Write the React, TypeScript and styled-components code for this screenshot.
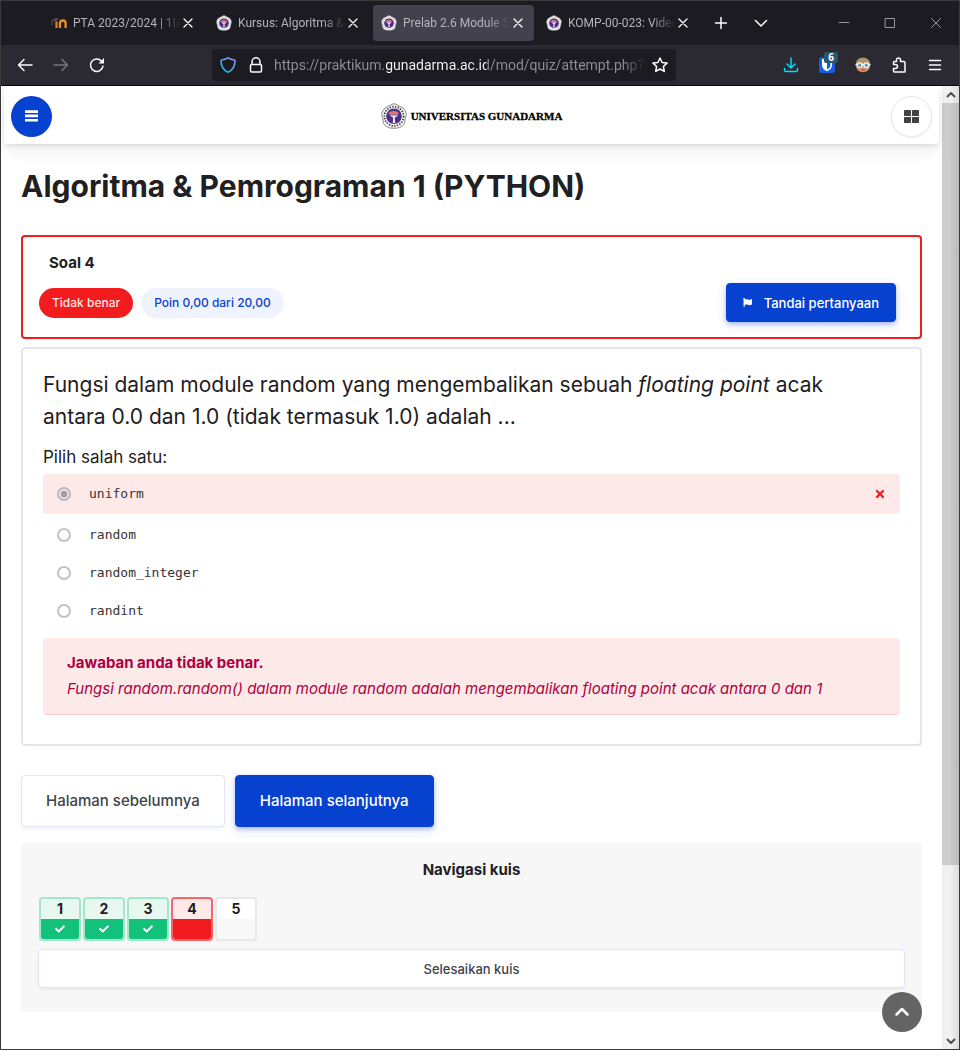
import React, { useState } from 'react';
import styled, { createGlobalStyle, css } from 'styled-components';
import { FaCheck, FaFlag, FaTimes } from 'react-icons/fa';

const GlobalStyle = createGlobalStyle`
  *, *::before, *::after { box-sizing: border-box; }
  body { margin: 0; background: #ffffff; }
  button, input { font: inherit; margin: 0; }
  button { border: 0; padding: 0; background: none; cursor: pointer; }
  h1, h2, p, fieldset, legend { margin: 0; padding: 0; border: 0; }
  svg { display: block; flex: none; }
`;

const color = {
  blue: '#0641d0',
  red: '#f21c1f',
  green: '#12c27a',
  ink: '#1f2021',
  text: '#404347',
};

const BrowserWindow = styled.div`
  display: flex;
  flex-direction: column;
  min-height: 100vh;
  border: 1px solid #3a3a3d;
  font-family: Inter, 'Open Sans', sans-serif;
  color: ${color.ink};
`;

const TabBar = styled.div`
  display: flex;
  align-items: center;
  height: 44px;
  padding-left: 42px;
  background: #1c1b22;
  color: #fbfbfe;
  font-family: Roboto, 'Open Sans', sans-serif;
  font-size: 12px;
`;

const TabList = styled.div`
  display: flex;
  gap: 4px;
  min-width: 0;
`;

const Tab = styled.div<{ $active?: boolean }>`
  display: flex;
  align-items: center;
  flex: 0 1 161px;
  width: 161px;
  min-width: 0;
  height: 36px;
  padding: 0 8px;
  border-radius: 4px;
  background: ${(p) => (p.$active ? '#42414d' : 'transparent')};
`;

const TabTitle = styled.button`
  flex: 1;
  min-width: 0;
  margin-left: 6px;
  overflow: hidden;
  white-space: nowrap;
  text-align: left;
  color: #b4b3ba;
  mask-image: linear-gradient(to right, #000 calc(100% - 22px), transparent);
`;

const ChromeButton = styled.button<{ $width: number }>`
  display: flex;
  flex: none;
  align-items: center;
  justify-content: center;
  width: ${(p) => p.$width}px;
  height: 32px;
  color: #fbfbfe;
`;

const TabActions = styled.div`
  display: flex;
  gap: 4px;
  margin-left: 4px;
`;

const WindowControls = styled.div`
  display: flex;
  margin-left: auto;
`;

const Toolbar = styled.div`
  display: flex;
  align-items: center;
  height: 41px;
  padding: 0 6px;
  background: #2b2a33;
  border-bottom: 1px solid #0c0c0d;
`;

const AddressBar = styled.div`
  display: flex;
  flex: 1;
  align-items: center;
  min-width: 0;
  height: 32px;
  margin: 0 97px;
  padding: 0 2px;
  border-radius: 4px;
  background: #1c1b22;
`;

const AddressInput = styled.input`
  flex: 1;
  min-width: 0;
  margin-left: 4px;
  padding: 0;
  border: 0;
  outline: 0;
  font-family: Roboto, 'Open Sans', sans-serif;
  font-size: 14px;
  line-height: 24px;
  color: transparent;
  background: linear-gradient(
    to right,
    #8f8f9a 0 111px,
    #fbfbfe 111px 212px,
    #8f8f9a 212px calc(100% - 24px),
    transparent
  );
  background-clip: text;
  -webkit-background-clip: text;
`;

const Extension = styled.button`
  position: relative;
  display: flex;
  align-items: center;
  justify-content: center;
  width: 36px;
  height: 32px;
  color: #fbfbfe;
`;

const ExtensionCount = styled.span`
  position: absolute;
  top: 3px;
  right: 7px;
  width: 14px;
  border-radius: 2px;
  background: #28566a;
  color: #ffffff;
  font: bold 10px/11px 'Open Sans', sans-serif;
  text-align: center;
`;

const Viewport = styled.div`
  display: flex;
  flex: 1;
`;

const Page = styled.div`
  position: relative;
  flex: 1;
  min-width: 0;
  background: #ffffff;
`;

const SiteHeader = styled.header`
  display: grid;
  grid-template-columns: 1fr auto 1fr;
  align-items: center;
  height: 58px;
  margin: 0 3px;
  padding: 2px 7px 0;
  border-radius: 0 0 4px 4px;
  background: #ffffff;
  box-shadow: 0 2px 4px rgba(0, 0, 0, 0.1), 0 8px 16px rgba(0, 0, 0, 0.06);
`;

const RoundButton = styled.button<{ $variant: 'primary' | 'plain' }>`
  display: flex;
  align-items: center;
  justify-content: center;
  width: 41px;
  height: 41px;
  border-radius: 50%;
  ${(p) =>
    p.$variant === 'primary'
      ? css`
          background: ${color.blue};
          color: #ffffff;
        `
      : css`
          justify-self: end;
          border: 1px solid #e6e8f4;
          background: #ffffff;
          color: ${color.text};
          box-shadow: 0 1px 3px rgba(20, 30, 90, 0.08);
        `}
`;

const Brand = styled.a`
  display: flex;
  align-items: center;
  gap: 4px;
  color: #000000;
  font: bold 11px/16px 'Liberation Serif', serif;
  text-decoration: none;
  -webkit-text-stroke: 0.3px #000000;
`;

const Content = styled.main`
  padding: 20px 20px 37px;
`;

const Title = styled.h1`
  margin-bottom: 27px;
  font-size: 30px;
  line-height: 44px;
  font-weight: 700;
`;

const InfoCard = styled.section`
  margin-bottom: 8px;
  padding: 14px 24px 15px 16px;
  border: 2px solid ${color.red};
  border-radius: 4px;
`;

const InfoTitle = styled.h2`
  margin-bottom: 8px;
  padding-left: 10px;
  font-size: 15px;
  line-height: 24px;
  font-weight: 700;
`;

const InfoRow = styled.div`
  display: flex;
  align-items: center;
  gap: 8px;
`;

const Pill = styled.span<{ $tone: 'danger' | 'info' }>`
  padding: 0 13px;
  border-radius: 15px;
  font-size: 12px;
  line-height: 30px;
  font-weight: 500;
  color: ${(p) => (p.$tone === 'danger' ? '#ffe6e6' : '#0b3fcb')};
  background: ${(p) => (p.$tone === 'danger' ? color.red : '#eff3ff')};
`;

const Button = styled.button<{
  $variant: 'primary' | 'plain';
  $size: 'small' | 'large';
  $block?: boolean;
}>`
  display: flex;
  align-items: center;
  justify-content: center;
  gap: 12px;
  width: ${(p) => (p.$block ? '100%' : 'auto')};
  height: ${(p) => (p.$size === 'large' ? 52 : 39)}px;
  padding: ${(p) => (p.$size === 'large' ? '0 24px 2px' : '0 16px')};
  border: 1px solid ${(p) => (p.$variant === 'primary' ? color.blue : '#e2e6f3')};
  border-radius: 4px;
  font-size: ${(p) => (p.$size === 'large' ? 15 : 13)}px;
  font-weight: 500;
  color: ${(p) => (p.$variant === 'primary' ? '#ffffff' : color.text)};
  background: ${(p) => (p.$variant === 'primary' ? color.blue : '#ffffff')};
  box-shadow: ${(p) =>
    p.$variant === 'primary'
      ? '0 2px 4px rgba(6, 65, 208, 0.3), 0 4px 12px rgba(6, 65, 208, 0.12)'
      : '0 2px 3px rgba(20, 30, 90, 0.06)'};
`;

const FlagButton = styled(Button)`
  margin-left: auto;
`;

const QuestionCard = styled.section`
  padding: 20px 20px 29px;
  border: 2px solid #e6e6e6;
  border-radius: 4px;
`;

const QuestionText = styled.p`
  margin-bottom: 12px;
  font-size: 21px;
  line-height: 32px;
`;

const Answers = styled.fieldset`
  min-width: 0;
`;

const AnswersLegend = styled.legend`
  font-size: 17px;
  line-height: 24px;
  margin-bottom: 5px;
`;

const Answer = styled.label<{ $wrong?: boolean }>`
  display: flex;
  align-items: center;
  gap: 18px;
  height: ${(p) => (p.$wrong ? 40 : 38)}px;
  margin-bottom: ${(p) => (p.$wrong ? 2 : 0)}px;
  padding: 0 14px;
  border-radius: 4px;
  background: ${(p) => (p.$wrong ? '#fee9e9' : 'transparent')};
  color: #363332;
  font: 13px/20px 'DejaVu Sans Mono', monospace;

  svg {
    margin-left: auto;
  }
`;

const Radio = styled.input`
  appearance: none;
  width: 14px;
  height: 14px;
  border: 2px solid #c2c1c9;
  border-radius: 50%;
  background: #ffffff;

  &:checked {
    border-color: #c1b4bf;
    background: radial-gradient(circle, #a79daa 0 3px, #fbeff1 4px);
  }
`;

const Feedback = styled.div`
  margin-top: 8px;
  padding: 12px 24px;
  border-bottom: 1px solid #fbcdd2;
  border-radius: 4px;
  background: #fee9e9;
  color: #ad003f;
  font-size: 15px;
  line-height: 26px;
`;

const Pager = styled.div`
  display: flex;
  gap: 10px;
  margin: 29px 0 16px;
`;

const QuizNav = styled.nav`
  padding: 15px 17px 24px;
  border-radius: 4px;
  background: #f7f7f7;
`;

const QuizNavTitle = styled.h2`
  margin-bottom: 15px;
  font-size: 15px;
  line-height: 24px;
  font-weight: 700;
  text-align: center;
`;

const QuizNavList = styled.div`
  display: flex;
  margin-bottom: 8px;
`;

type State = 'right' | 'wrong' | 'blank';

const cellColors: Record<State, { border: string; top: string; bottom: string }> = {
  right: { border: '#a0e8c9', top: '#e7f8f0', bottom: color.green },
  wrong: { border: '#f6656c', top: '#fee8e8', bottom: color.red },
  blank: { border: '#e8e8e8', top: '#ffffff', bottom: '#f8f8f8' },
};

const QuizCell = styled.a<{ $state: State }>`
  display: grid;
  grid-template-rows: 20px 20px;
  justify-items: center;
  align-items: center;
  width: 42px;
  margin: 0 1px;
  border: 2px solid ${(p) => cellColors[p.$state].border};
  border-radius: 4px;
  background: linear-gradient(
    ${(p) => cellColors[p.$state].top} 50%,
    ${(p) => cellColors[p.$state].bottom} 50%
  );
  background-origin: padding-box;
  background-clip: padding-box;
  color: ${color.ink};
  font-size: 14px;
  line-height: 20px;
  font-weight: 700;
  text-decoration: none;

  svg {
    color: #ffffff;
  }
`;

const ToTop = styled.button`
  position: absolute;
  right: 20px;
  bottom: 17px;
  display: flex;
  align-items: center;
  justify-content: center;
  width: 40px;
  height: 40px;
  border-radius: 50%;
  background: #646464;
  color: #ffffff;
`;

const Scrollbar = styled.div`
  display: flex;
  flex-direction: column;
  width: 17px;
  background: linear-gradient(to right, #f0f0f0 50%, #dcdcdc);
  color: #505050;
`;

const ScrollArrow = styled.button`
  display: flex;
  flex: none;
  align-items: center;
  justify-content: center;
  height: 17px;
  color: #505050;
`;

const ScrollTrack = styled.div`
  flex: 1;
`;

const ScrollThumb = styled.div`
  height: 82%;
  background: linear-gradient(to right, #cdcdcd 40%, #bababa);
`;

type StrokeProps = {
  d: string;
  size?: number;
  width?: number;
  stroke?: string;
  view?: number;
};

const Stroke = ({ d, size = 16, width = 1.5, stroke = 'currentColor', view = 16 }: StrokeProps) => (
  <svg
    width={size}
    height={size}
    viewBox={`0 0 ${view} ${view}`}
    fill="none"
    stroke={stroke}
    strokeWidth={width}
    strokeLinecap="round"
    strokeLinejoin="round"
    aria-hidden="true"
  >
    <path d={d} />
  </svg>
);

const BarsIcon = () => (
  <svg width="13" height="12" viewBox="0 0 13 12" fill="currentColor" aria-hidden="true">
    <path d="M0 .3h13v2.600H0zM0 4.600h13v2.600H0zM0 8.900h13v2.600H0z" />
  </svg>
);

const BlocksIcon = () => (
  <svg width="15" height="13" viewBox="0 0 15 13" fill="currentColor" aria-hidden="true">
    <rect width="7" height="6" rx=".6" />
    <rect x="8" width="7" height="6" rx=".6" />
    <rect y="7" width="7" height="6" rx=".6" />
    <rect x="8" y="7" width="7" height="6" rx=".6" />
  </svg>
);

const MoodleIcon = () => (
  <svg width="16" height="16" viewBox="0 0 16 16" fill="none" aria-hidden="true">
    <path d="M9 13V8.300a2.500 2.500 0 0 1 5.600 0V13" stroke="#f08a24" strokeWidth="2.300" />
    <path d="M5.500 6.500V13" stroke="#e07b22" strokeWidth="2.300" />
    <path d="M0 5.400 5 3l3 .6-3 2.600z" fill="#54504f" />
    <path d="M1 6v4" stroke="#7c4a2d" />
  </svg>
);

const Seal = ({ size }: { size: number }) => (
  <svg width={size} height={size} viewBox="0 0 26 26" aria-hidden="true">
    <path
      d="M13 .8c1.5 0 2.6 1 4 1.7 1.600.8 3.500 1.300 4.900 2.500 1.600 1.400 3 3.600 3.300 5.600.3 1.700-.6 3.300-.9 5-.4 2-.5 4.500-1.700 6.200-1.200 1.600-3.500 2.600-5.400 3.100-1.400.4-2.800.3-4.200.3s-2.800.1-4.200-.3c-1.900-.5-4.200-1.500-5.400-3.100-1.200-1.700-1.300-4.200-1.700-6.200-.3-1.700-1.200-3.300-.9-5 .3-2 1.700-4.200 3.300-5.600C5.500 3.800 7.400 3.300 9 2.500c1.400-.7 2.500-1.700 4-1.700z"
      fill="#f4f4f4"
      stroke="#6b6b6b"
      strokeWidth=".8"
    />
    <circle
      cx="13"
      cy="13.300"
      r="9.600"
      fill="none"
      stroke={size > 20 ? '#333333' : '#b9b6b8'}
      strokeWidth="1.700"
      strokeDasharray="1.300 1.400"
    />
    <circle cx="13" cy="13.300" r="7.800" fill="#4d2e86" />
    <path d="M7.500 10.500c.4-2 2-1 2.500-2.500.8.8 1.500.6 2-.8.700 1.200 1.800 1.600 2.600.5.6 1.400 1.800.8 2.300 1.200.9.7.8 1.800-.1 2.400H8.500z" fill="#e8775f" />
    <path d="M8.500 11.500h9l-1.700 2.500h-5.600z" fill="#c9a0c8" />
    <path d="M11 13h4l-1.200 2.500.5 4.500h-2.600l.5-4.500z" fill="#f5e9ee" />
  </svg>
);

const BitwardenIcon = () => (
  <svg width="16" height="16" viewBox="0 0 16 16" aria-hidden="true">
    <rect width="16" height="16" rx="2.500" fill="#175ddc" />
    <path d="M3 2h10v6.300c0 3-2.400 4.700-5 6-2.600-1.300-5-3-5-6z" fill="#fff" />
    <path d="M8 3.700h3.400v4.700c0 1.900-1.500 3-3.400 4z" fill="#175ddc" />
  </svg>
);

const AvatarIcon = () => (
  <svg width="16" height="16" viewBox="0 0 16 16" aria-hidden="true">
    <circle cx="8" cy="8" r="7.300" fill="#d98f68" />
    <path d="M1 7C1 3 4 .7 8 .7S15 3 15 7c-3-1.500-11-1.500-14 0z" fill="#b09468" />
    <path d="M.5 7.500h15" stroke="#eef3f4" strokeWidth="1.500" />
    <circle cx="4.700" cy="8.200" r="2.300" fill="#5d9bab" stroke="#f4f8f8" strokeWidth="1.200" />
    <circle cx="11.300" cy="8.200" r="2.300" fill="#5d9bab" stroke="#f4f8f8" strokeWidth="1.200" />
    <path d="M6 13h4" stroke="#a7523d" />
  </svg>
);

const ShieldIcon = () => (
  <svg width="16" height="16" viewBox="0 0 16 16" fill="none" aria-hidden="true">
    <defs>
      <linearGradient id="shield" x1="0" y1="1" x2="1" y2="0">
        <stop offset="0" stopColor="#00c8f0" />
        <stop offset="1" stopColor="#a48cff" />
      </linearGradient>
    </defs>
    <path
      d="M8 .8c2 1.200 4 1.900 6.300 2.200.5 0 .7.300.7.700 0 5.300-2 9.300-7 11.600C3 13 1 9 1 3.700c0-.4.200-.7.700-.7C4 2.700 6 2 8 .8z"
      stroke="url(#shield)"
      strokeWidth="1.500"
    />
  </svg>
);

const tabs = [
  { title: 'PTA 2023/2024 | 1IA0', icon: <MoodleIcon /> },
  { title: 'Kursus: Algoritma &', icon: <Seal size={16} /> },
  { title: 'Prelab 2.6 Module St', icon: <Seal size={16} />, active: true },
  { title: 'KOMP-00-023: Video', icon: <Seal size={16} /> },
];

const answers = ['uniform', 'random', 'random_integer', 'randint'];

const cells: State[] = ['right', 'right', 'right', 'wrong', 'blank'];

export default function App() {
  const [url, setUrl] = useState('https://praktikum.gunadarma.ac.id/mod/quiz/attempt.php?at');
  const [choice, setChoice] = useState('uniform');

  return (
    <BrowserWindow>
      <GlobalStyle />
      <TabBar>
        <TabList>
          {tabs.map((tab) => (
            <Tab key={tab.title} $active={tab.active}>
              {tab.icon}
              <TabTitle>{tab.title}</TabTitle>
              <ChromeButton $width={16} aria-label="Tutup tab">
                <Stroke d="M4 4l8 8M12 4l-8 8" width={1.3} />
              </ChromeButton>
            </Tab>
          ))}
        </TabList>
        <TabActions>
          <ChromeButton $width={36} aria-label="Tab baru">
            <Stroke d="M8 2.500v11M2.500 8h11" />
          </ChromeButton>
          <ChromeButton $width={36} aria-label="Daftar tab">
            <Stroke d="M2.500 5.500L8 11l5.500-5.500" />
          </ChromeButton>
        </TabActions>
        <WindowControls>
          <ChromeButton $width={46} aria-label="Perkecil">
            <Stroke d="M3 7.500h10" width={1} stroke="#98979d" />
          </ChromeButton>
          <ChromeButton $width={46} aria-label="Perbesar">
            <Stroke d="M3.500 3.500h9v9h-9z" width={1} stroke="#98979d" />
          </ChromeButton>
          <ChromeButton $width={46} aria-label="Tutup">
            <Stroke d="M3.500 3.500l9 9M12.500 3.500l-9 9" width={1} stroke="#98979d" />
          </ChromeButton>
        </WindowControls>
      </TabBar>

      <Toolbar>
        <ChromeButton $width={36} aria-label="Kembali">
          <Stroke d="M15 8H1.500M7 2.500L1.500 8 7 13.500" />
        </ChromeButton>
        <ChromeButton $width={36} aria-label="Maju">
          <Stroke d="M1 8h13.500M9 2.500L14.500 8 9 13.500" stroke="#77767e" />
        </ChromeButton>
        <ChromeButton $width={36} aria-label="Muat ulang">
          <svg width="16" height="16" viewBox="0 0 16 16" fill="none" aria-hidden="true">
            <path d="M14 9.200A6.300 6.300 0 1 1 12.300 3.800" stroke="currentColor" strokeWidth="1.500" strokeLinecap="round" />
            <path d="M15 1v5.500H9.500z" fill="currentColor" />
          </svg>
        </ChromeButton>
        <AddressBar>
          <ChromeButton $width={28} aria-label="Perlindungan">
            <ShieldIcon />
          </ChromeButton>
          <ChromeButton $width={28} aria-label="Info situs">
            <Stroke d="M4 7.500V4.800a4 4 0 0 1 8 0v2.700M3.700 7.500h8.600q1.200 0 1.200 1.200v5.100q0 1.200-1.200 1.200H3.700q-1.200 0-1.200-1.200V8.700q0-1.200 1.200-1.200z" />
          </ChromeButton>
          <AddressInput aria-label="Alamat" value={url} onChange={(e) => setUrl(e.target.value)} />
          <ChromeButton $width={28} aria-label="Markahi halaman">
            <Stroke d="M8 1l2.100 4.500 4.900.6-3.600 3.400.9 4.900L8 12l-4.300 2.400.9-4.900L1 6.100l4.900-.6z" />
          </ChromeButton>
        </AddressBar>
        <Extension aria-label="Unduhan">
          <Stroke d="M8 1v9.500M4 7l4 4 4-4M1.500 11.500v1.700q0 1.300 1.300 1.300h10.400q1.300 0 1.300-1.300v-1.700" stroke="#00ddff" />
        </Extension>
        <Extension aria-label="Bitwarden">
          <BitwardenIcon />
          <ExtensionCount>6</ExtensionCount>
        </Extension>
        <Extension aria-label="Profil">
          <AvatarIcon />
        </Extension>
        <Extension aria-label="Ekstensi">
          <Stroke d="M5.500 4.500V3a2 2 0 0 1 4 0v1.500h3q1.500 0 1.500 1.500v8.500q0 .5-.5.5h-10q-1 0-1-1v-2.500h2a2 2 0 0 0 0-4h-2V5.500q0-1 1-1z" />
        </Extension>
        <Extension aria-label="Menu">
          <Stroke d="M2.500 3.500h11M2.500 8h11M2.500 12.500h11" />
        </Extension>
      </Toolbar>

      <Viewport>
        <Page>
          <SiteHeader>
            <RoundButton $variant="primary" aria-label="Buka menu">
              <BarsIcon />
            </RoundButton>
            <Brand href="#">
              <Seal size={26} />
              UNIVERSITAS GUNADARMA
            </Brand>
            <RoundButton $variant="plain" aria-label="Blok">
              <BlocksIcon />
            </RoundButton>
          </SiteHeader>

          <Content>
            <Title>Algoritma &amp; Pemrograman 1 (PYTHON)</Title>

            <InfoCard>
              <InfoTitle>Soal 4</InfoTitle>
              <InfoRow>
                <Pill $tone="danger">Tidak benar</Pill>
                <Pill $tone="info">Poin 0,00 dari 20,00</Pill>
                <FlagButton $variant="primary" $size="small">
                  <FaFlag size={9} />
                  Tandai pertanyaan
                </FlagButton>
              </InfoRow>
            </InfoCard>

            <QuestionCard>
              <QuestionText>
                Fungsi dalam module random yang mengembalikan sebuah <em>floating point</em> acak
                <br />
                antara 0.0 dan 1.0 (tidak termasuk 1.0) adalah ...
              </QuestionText>
              <Answers>
                <AnswersLegend>Pilih salah satu:</AnswersLegend>
                {answers.map((answer) => (
                  <Answer key={answer} $wrong={answer === 'uniform'}>
                    <Radio
                      type="radio"
                      name="answer"
                      checked={choice === answer}
                      onChange={() => setChoice(answer)}
                    />
                    {answer}
                    {answer === 'uniform' && <FaTimes size={12} color={color.red} />}
                  </Answer>
                ))}
              </Answers>
              <Feedback>
                <p>
                  <strong>Jawaban anda tidak benar.</strong>
                </p>
                <p>
                  <em>
                    Fungsi random.random() dalam module random adalah mengembalikan floating point
                    acak antara 0 dan 1
                  </em>
                </p>
              </Feedback>
            </QuestionCard>

            <Pager>
              <Button $variant="plain" $size="large">
                Halaman sebelumnya
              </Button>
              <Button $variant="primary" $size="large">
                Halaman selanjutnya
              </Button>
            </Pager>

            <QuizNav aria-label="Navigasi kuis">
              <QuizNavTitle>Navigasi kuis</QuizNavTitle>
              <QuizNavList>
                {cells.map((state, i) => (
                  <QuizCell key={i} href="#" $state={state}>
                    {i + 1}
                    {state === 'right' && <FaCheck size={10} />}
                  </QuizCell>
                ))}
              </QuizNavList>
              <Button $variant="plain" $size="small" $block>
                Selesaikan kuis
              </Button>
            </QuizNav>
          </Content>

          <ToTop aria-label="Kembali ke atas">
            <Stroke d="M2.500 10.500L8 5l5.500 5.500" width={2.5} />
          </ToTop>
        </Page>

        <Scrollbar>
          <ScrollArrow aria-label="Gulir ke atas">
            <Stroke d="M1.500 6.500L5 3l3.500 3.500" size={10} view={10} width={2} />
          </ScrollArrow>
          <ScrollTrack>
            <ScrollThumb />
          </ScrollTrack>
          <ScrollArrow aria-label="Gulir ke bawah">
            <Stroke d="M1.500 3.500L5 7l3.500-3.500" size={10} view={10} width={2} />
          </ScrollArrow>
        </Scrollbar>
      </Viewport>
    </BrowserWindow>
  );
}
